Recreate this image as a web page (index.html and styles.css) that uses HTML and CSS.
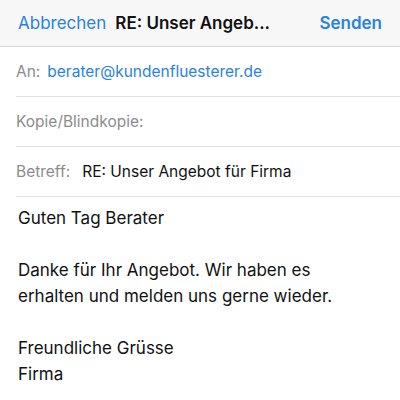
FILE: index.html
```html
<!DOCTYPE html>
<html>
<head>
    <title>Neue E-Mail</title>
    <link rel="stylesheet" href="styles.css">
</head>
<body>
    <div class="nav">
        <span class="nav-btn">Abbrechen</span>
        <span class="nav-title">RE: Unser Angeb...</span>
        <span class="nav-btn send">Senden</span>
    </div>

    <div class="field">
        <span class="label">An:</span>
        <span class="address">berater@kundenfluesterer.de</span>
    </div>
    <div class="field">
        <span class="label">Kopie/Blindkopie:</span>
    </div>
    <div class="field">
        <span class="label">Betreff:</span>
        <span class="subject">RE: Unser Angebot für Firma</span>
    </div>

    <div class="message">
        <p>Guten Tag Berater</p>
        <p>Danke für Ihr Angebot. Wir haben es<br>erhalten und melden uns gerne wieder.</p>
        <p>Freundliche Grüsse<br>Firma</p>
    </div>
</body>
</html>
```

FILE: styles.css
```css
body {
    font-family: Inter, "Liberation Sans", sans-serif;
    margin: 0;
    background-color: #fff;
    color: #111;
}

.nav {
    height: 46px;
    display: flex;
    align-items: center;
    padding: 0 18px;
    background-color: #f7f7f7;
    border-bottom: 1px solid #d6d6d6;
    font-size: 17px;
}

.nav-btn {
    color: #2a82e0;
}

.nav-title {
    font-weight: 600;
    margin-left: 9px;
    flex: 1;
}

.send {
    font-weight: 600;
}

.field {
    height: 49px;
    margin-left: 16px;
    display: flex;
    align-items: center;
    border-bottom: 1px solid #e2e2e2;
    font-size: 15.5px;
}

.label {
    color: #8c8c8c;
    margin-right: 7px;
}

.address {
    color: #2a82e0;
}

.subject {
    margin-left: 5px;
}

.message {
    padding: 8px 18px 0 18px;
    font-size: 17px;
    line-height: 26px;
}

.message p {
    margin: 0 0 26px 0;
}

.message p:last-child {
    margin-bottom: 0;
}
```
